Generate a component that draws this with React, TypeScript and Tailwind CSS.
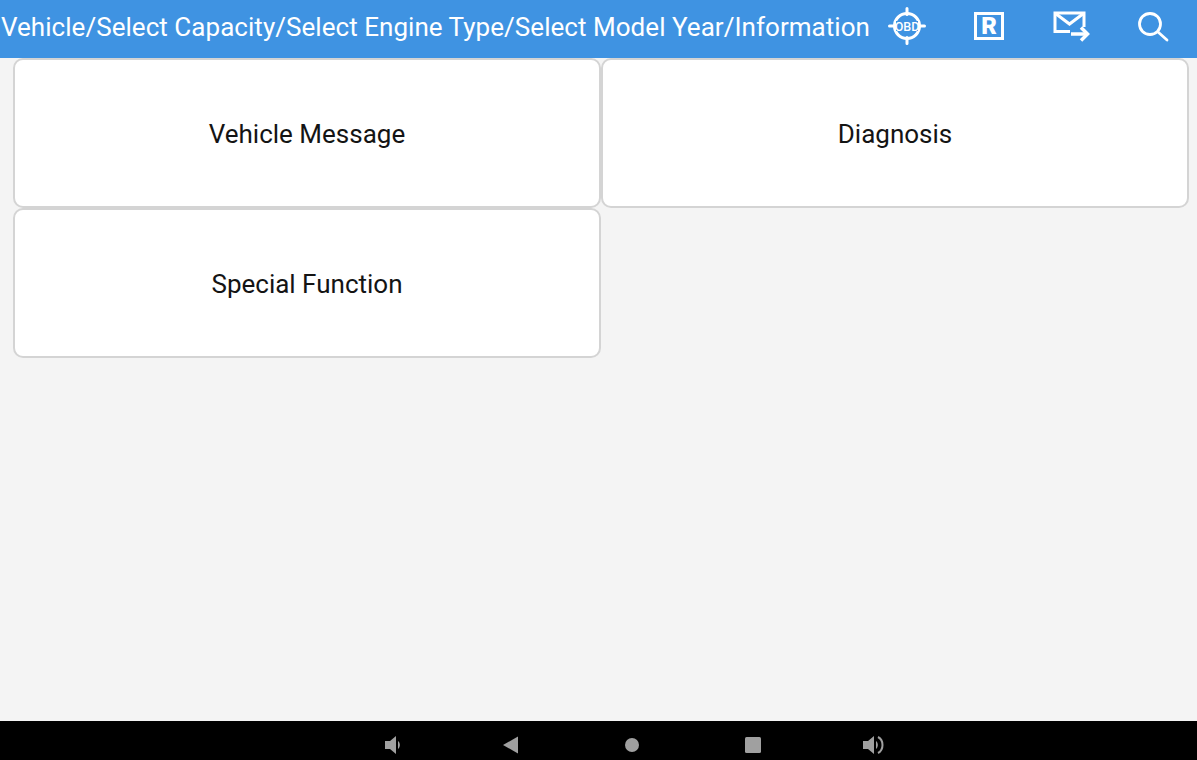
import React from 'react';

const Card: React.FC<{ label: string }> = ({ label }) => (
  <button className="h-[150px] pt-[3px] bg-white border-2 border-[#d4d4d4] rounded-[10px] flex items-center justify-center text-[26px] text-[#141414]">
    {label}
  </button>
);

const ObdIcon = () => (
  <svg width="38" height="38" viewBox="0 0 38 38" fill="none" stroke="white">
    <circle cx="19" cy="19" r="12.5" strokeWidth="3" />
    <path d="M19 1.5v6M19 30.5v6M1.5 19h6M30.5 19h6" strokeWidth="3" strokeLinecap="round" />
    <rect x="8" y="14" width="22" height="10" fill="#3f93e2" stroke="none" />
    <text x="19" y="23.5" textAnchor="middle" fontSize="12.5" fontWeight="500" fill="white" stroke="none" fontFamily="Roboto, sans-serif">OBD</text>
  </svg>
);

const RIcon = () => (
  <div className="w-[30px] h-[28px] border-[3px] border-white flex items-center justify-center text-white text-[24px] font-black leading-none">
    R
  </div>
);

const MailIcon = () => (
  <svg width="38" height="32" viewBox="0 0 38 32" fill="none" stroke="white" strokeWidth="3">
    <path d="M17 21.5H2V3h29v14" />
    <path d="M2.5 3.5l14 10.5 14-10.5" />
    <path d="M18 24h15" strokeWidth="3.5" />
    <path d="M28 17.5l6.5 6.5-6.5 6.5" strokeWidth="3.5" />
  </svg>
);

const SearchIcon = () => (
  <svg width="34" height="34" viewBox="0 0 34 34" fill="none" stroke="white" strokeWidth="2.8" strokeLinecap="round">
    <circle cx="13" cy="15" r="10.5" />
    <path d="M21 23l9 8" />
  </svg>
);

export default function App() {
  return (
    <div className="w-[1197px] h-[760px] flex flex-col bg-[#f4f4f4] overflow-hidden font-['Roboto',sans-serif]">
      {/* Header */}
      <div className="h-[58px] shrink-0 bg-[#3f93e2] flex items-center">
        <div className="w-[870px] shrink-0 pl-[1px] pb-[3px] text-white text-[26px] tracking-[0.04px] whitespace-nowrap overflow-hidden">
          Vehicle/Select Capacity/Select Engine Type/Select Model Year/Information
        </div>
        <div className="h-full pb-[6px] flex items-center">
          <div className="ml-[18px]"><ObdIcon /></div>
          <div className="ml-[48px]"><RIcon /></div>
          <div className="ml-[49px]"><MailIcon /></div>
          <div className="ml-[46px]"><SearchIcon /></div>
        </div>
      </div>

      {/* Cards */}
      <div className="flex-1 pl-[13px]">
        <div className="grid grid-cols-[588px_588px]">
          <Card label="Vehicle Message" />
          <Card label="Diagnosis" />
          <Card label="Special Function" />
        </div>
      </div>

      {/* Android nav bar */}
      <div className="h-[39px] shrink-0 bg-black pl-[380px] pt-[12px]">
        <svg width="520" height="24" viewBox="0 0 520 24" fill="#a0a0a0">
          <path d="M5 8h5l6-5v18l-6-5H5zM18 8c2.5 2 2.5 6 0 8z" />
          <path d="M123 12l15-8.5v17z" />
          <circle cx="252" cy="12" r="7" />
          <rect x="365" y="4" width="16" height="16" rx="1.5" />
          <path d="M483 8h5l6-5v18l-6-5h-5zM496 8c2.5 2 2.5 6 0 8z" />
          <path d="M498 4c6 3 6 13 0 16" fill="none" stroke="#a0a0a0" strokeWidth="2" />
        </svg>
      </div>
    </div>
  );
}
